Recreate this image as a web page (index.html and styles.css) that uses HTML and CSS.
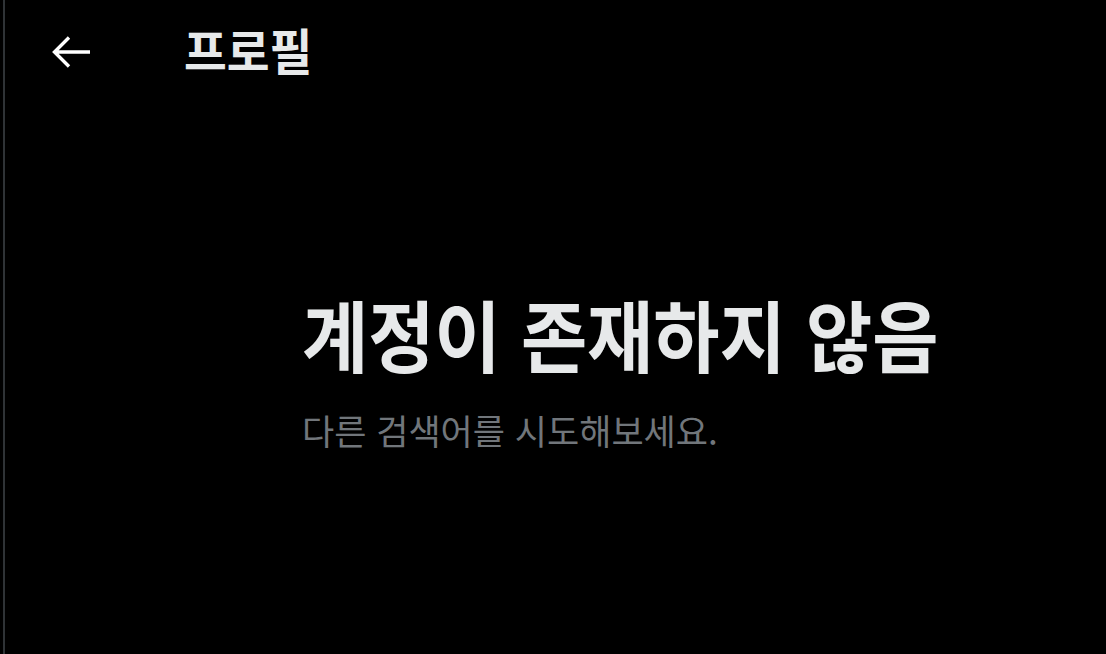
FILE: index.html
```html
<!DOCTYPE html>
<html lang="ko">
<head>
<meta charset="utf-8">
<link rel="stylesheet" href="styles.css">
</head>
<body>
<div class="page">
  <main class="column">
    <header class="topbar">
      <button class="back" aria-label="뒤로">
        <svg viewBox="0 0 40 34" width="40" height="34"><path d="M2.5 17 H38 M17 2.5 L2.5 17 L17 31.5" fill="none" stroke="#fff" stroke-width="3.4" stroke-linejoin="miter"/></svg>
      </button>
      <h1 class="title">프로필</h1>
    </header>
    <section class="empty">
      <h2 class="empty-title">계정이 존재하지 않음</h2>
      <p class="empty-sub">다른 검색어를 시도해보세요.</p>
    </section>
  </main>
</div>
</body>
</html>
```
FILE: styles.css
```css
html, body {
  margin: 0;
  padding: 0;
  background: #000;
  height: 100%;
}
body {
  font-family: "Noto Sans CJK KR", "Noto Sans", sans-serif;
  color: #e7e9ea;
  overflow: hidden;
}
.page {
  display: flex;
  height: 100%;
  padding-left: 3px;
}
.column {
  flex: 1;
  border-left: 2px solid #2f3336;
  display: flex;
  flex-direction: column;
}
.topbar {
  display: flex;
  align-items: center;
  height: 104px;
  padding-left: 47px;
}
.back {
  background: none;
  border: 0;
  padding: 0;
  width: 40px;
  height: 34px;
  display: flex;
  margin-right: 92px;
}
.back svg { display: block; }
.title {
  margin: 0 0 6px;
  font-size: 46.5px;
  font-weight: 700;
  line-height: 1;
  color: #e7e9ea;
  transform: scaleY(1.04);
}
.empty {
  padding-left: 297px;
  padding-top: 190px;
}
.empty-title {
  margin: 0;
  font-size: 72px;
  font-weight: 700;
  line-height: 1;
  color: #e7e9ea;
  transform-origin: left top;
  transform: scaleY(1.09);
}
.empty-sub {
  margin: 46px 0 0;
  font-size: 35px;
  font-weight: 400;
  line-height: 1;
  color: #71767b;
}
```
